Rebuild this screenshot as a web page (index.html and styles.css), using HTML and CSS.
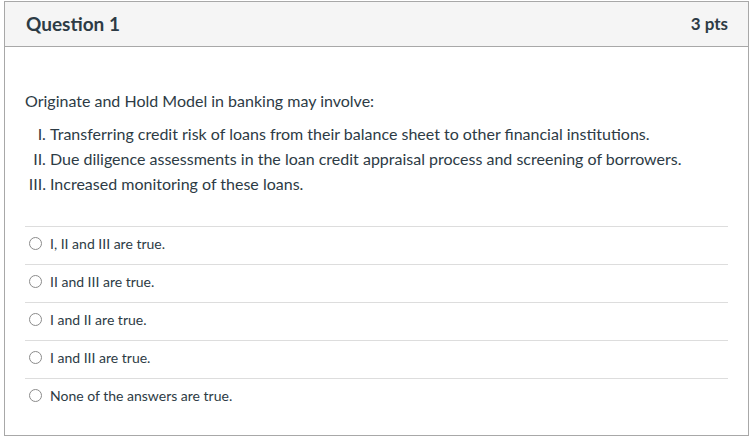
FILE: index.html
```html
<!DOCTYPE html>
<html>
<head>
<meta charset="utf-8">
<link rel="stylesheet" href="styles.css">
</head>
<body>
<div class="page">
  <div class="card">
    <div class="card-header">
      <h2 class="title">Question 1</h2>
      <span class="pts">3 pts</span>
    </div>
    <div class="card-body">
      <p class="prompt">Originate and Hold Model in banking may involve:</p>
      <ol class="items">
        <li>Transferring credit risk of loans from their balance sheet to other financial institutions.</li>
        <li>Due diligence assessments in the loan credit appraisal process and screening of borrowers.</li>
        <li>Increased monitoring of these loans.</li>
      </ol>
      <div class="answers">
        <label class="answer"><span class="radio"></span><span>I, II and III are true.</span></label>
        <label class="answer"><span class="radio"></span><span>II and III are true.</span></label>
        <label class="answer"><span class="radio"></span><span>I and II are true.</span></label>
        <label class="answer"><span class="radio"></span><span>I and III are true.</span></label>
        <label class="answer"><span class="radio"></span><span>None of the answers are true.</span></label>
      </div>
    </div>
  </div>
</div>
</body>
</html>
```

FILE: styles.css
```css
html, body {
  margin: 0;
  padding: 0;
  background: #ffffff;
}
body {
  font-family: Lato, "Open Sans", sans-serif;
  color: #2d3b45;
}
.page {
  padding: 1px 4px;
}
.card {
  width: 745px;
  height: 435px;
  box-sizing: border-box;
  border: 1px solid #a8a8a8;
}
.card-header {
  height: 45px;
  box-sizing: border-box;
  background: #f5f5f5;
  border-bottom: 1px solid #a8a8a8;
  display: flex;
  align-items: center;
  justify-content: space-between;
  padding: 0 20px 1px 21px;
}
.title {
  margin: 0;
  font-size: 19px;
  font-weight: 700;
}
.pts {
  font-size: 17px;
  font-weight: 700;
  color: #2d3b45;
}
.card-body {
  padding: 42px 20px 0 20px;
}
.prompt {
  margin: 0;
  font-size: 16px;
  line-height: 24px;
}
.items {
  margin: 8px 0 0 0;
  padding-left: 25px;
  list-style-type: upper-roman;
  font-size: 16px;
  line-height: 25px;
}
.answers {
  margin-top: 30px;
}
.answer {
  display: flex;
  align-items: center;
  height: 33px;
  padding-bottom: 4px;
  border-top: 1px solid #dddddd;
  font-size: 14px;
  padding-left: 4px;
}
.radio {
  width: 13px;
  height: 13px;
  border: 1px solid #8b8b8b;
  border-radius: 50%;
  margin-right: 8px;
  box-sizing: border-box;
  background: #fff;
}
```
